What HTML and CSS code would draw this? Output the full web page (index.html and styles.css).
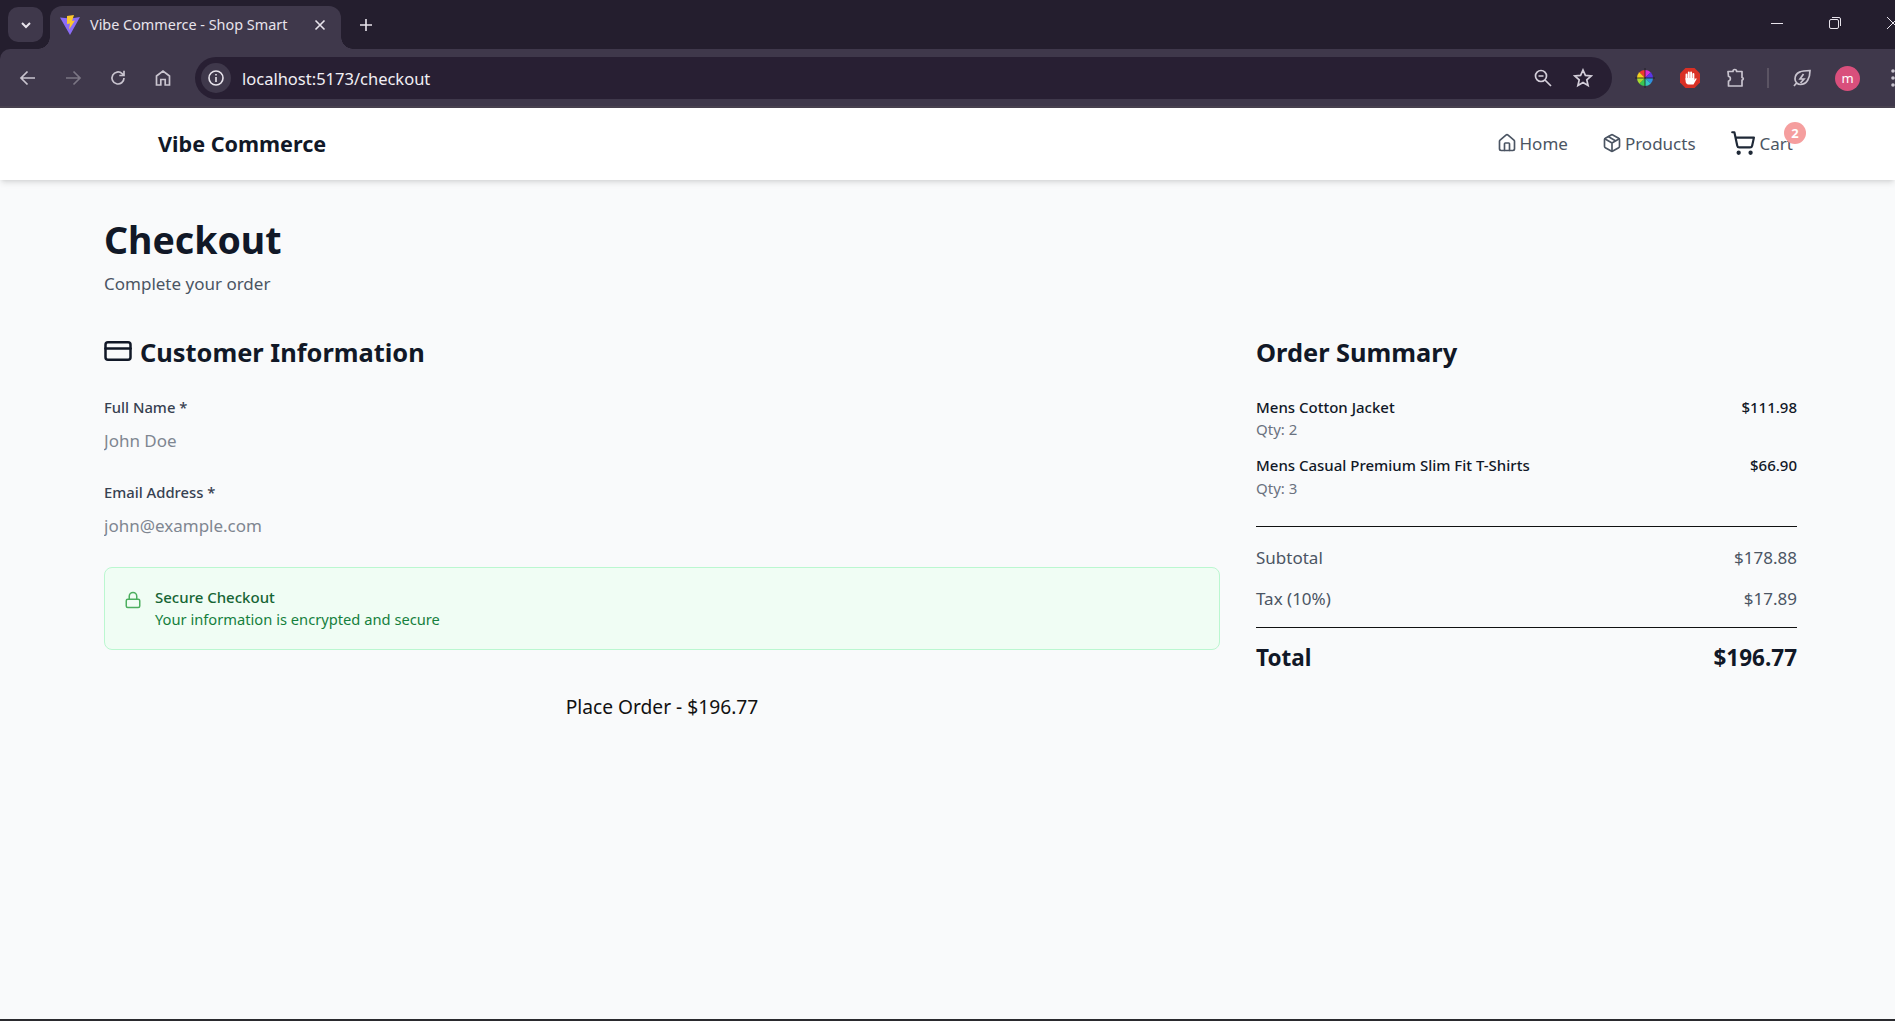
FILE: index.html
```html
<!DOCTYPE html>
<html lang="en">
<head>
    <meta charset="UTF-8">
    <meta name="viewport" content="width=device-width, initial-scale=1.0">
    <title>Vibe Commerce - Shop Smart</title>
    <link rel="stylesheet" href="styles.css">
</head>
<body>
    <div class="chrome">
        <div class="tabstrip">
            <div class="tab-search">
                <svg width="14" height="14" viewBox="0 0 14 14" fill="none" stroke="#e8e4ec" stroke-width="2"><path d="M3 5l4 4 4-4"/></svg>
            </div>
            <div class="tab">
                <svg class="favicon" width="20" height="20" viewBox="0 0 20 20">
                    <path d="M0 2.500L10 20 20 2 14 3 10 3.500z" fill="#8b6cf6"/>
                    <path d="M7 1l7-1-2 6 3-.5-6 9 1-6-3 .5z" fill="#fcc72b"/>
                </svg>
                <span class="tab-title">Vibe Commerce - Shop Smart</span>
                <svg class="tab-close" width="12" height="12" viewBox="0 0 12 12" stroke="#e8e4ec" stroke-width="1.600"><path d="M1.500 1.500l9 9M10.500 1.500l-9 9"/></svg>
            </div>
            <svg class="new-tab" width="14" height="14" viewBox="0 0 14 14" stroke="#e8e4ec" stroke-width="1.600"><path d="M7 1v12M1 7h12"/></svg>
            <div class="window-controls">
                <svg width="14" height="14" viewBox="0 0 14 14" stroke="#e8e4ec"><path d="M1 7.500h12"/></svg>
                <svg width="14" height="14" viewBox="0 0 14 14" fill="none" stroke="#e8e4ec"><rect x="1.500" y="3.500" width="9" height="9" rx="1.500"/><path d="M4 1.500h7a1.500 1.500 0 0 1 1.500 1.500v7"/></svg>
                <svg width="14" height="14" viewBox="0 0 14 14" stroke="#e8e4ec"><path d="M1 1l12 12M13 1L1 13"/></svg>
            </div>
        </div>

        <div class="toolbar">
            <svg class="tool-icon" width="20" height="20" viewBox="0 0 20 20" fill="none" stroke="#c9c4cf" stroke-width="1.700"><path d="M17 10H3.500M9.500 3.500L3 10l6.500 6.500"/></svg>
            <svg class="tool-icon" width="20" height="20" viewBox="0 0 20 20" fill="none" stroke="#7b7684" stroke-width="1.700"><path d="M3 10h13.500M10.500 3.500L17 10l-6.500 6.500"/></svg>
            <svg class="tool-icon" width="20" height="20" viewBox="0 0 20 20" fill="none" stroke="#c9c4cf" stroke-width="1.700"><path d="M16 10a6 6 0 1 1-1.900-4.400L16 7.500M16 2.800v4.700h-4.700"/></svg>
            <svg class="tool-icon" width="20" height="20" viewBox="0 0 20 20" fill="none" stroke="#c9c4cf" stroke-width="1.700"><path d="M3.500 17V8L10 3l6.500 5v9h-4.300v-5.500H7.800V17z"/></svg>
            <div class="omnibox">
                <div class="site-info">
                    <svg width="18" height="18" viewBox="0 0 18 18" fill="none" stroke="#e8e4ec" stroke-width="1.600"><circle cx="9" cy="9" r="7"/><path d="M9 8v5M9 5v1.600"/></svg>
                </div>
                <span class="url">localhost:5173/checkout</span>
                <svg class="omni-zoom" width="20" height="20" viewBox="0 0 20 20" fill="none" stroke="#d3ced9" stroke-width="1.700"><circle cx="8" cy="8" r="5.500"/><path d="M5.500 8h5M12 12l6 6"/></svg>
                <svg class="omni-star" width="20" height="20" viewBox="0 0 20 20" fill="none" stroke="#d3ced9" stroke-width="1.700"><path d="M10 2l2.400 5.400 5.800.6-4.400 3.900 1.300 5.700-5.100-3-5.100 3 1.300-5.700L1.800 8l5.800-.6z"/></svg>
            </div>
            <div class="extensions">
                <svg class="ext-wheel" width="22" height="22" viewBox="0 0 22 22">
                    <clipPath id="wheel"><circle cx="11" cy="11" r="8"/></clipPath>
                    <g clip-path="url(#wheel)">
                        <path d="M11 11V1L4 4z" fill="#f0392f"/><path d="M11 11V1l7 3z" fill="#d62fd8"/>
                        <path d="M11 11l7-7 3 7z" fill="#5a35e8"/><path d="M11 11h10l-3 7z" fill="#2f8fe0"/>
                        <path d="M11 11l7 7-7 3z" fill="#35c8c0"/><path d="M11 11v10l-7-3z" fill="#38c850"/>
                        <path d="M11 11l-7 7-3-7z" fill="#a8dc30"/><path d="M11 11H1l3-7z" fill="#f5d020"/>
                    </g>
                    <path d="M11 1v20M1 11h20" stroke="#1c1c1c" stroke-width=".8"/>
                </svg>
                <svg width="22" height="22" viewBox="0 0 22 22">
                    <path d="M6.500 1h9L21 6.500v9L15.500 21h-9L1 15.500v-9z" fill="#d93025"/>
                    <path d="M7.500 7.500v5M9.800 5.500v6M12.100 5.500v6M14.400 7v5" stroke="#fff" stroke-width="1.900" stroke-linecap="round"/>
                    <path d="M6.600 11h8.700v2l1.200-1.500c.7-.5 1.300.1 1 .8L14.500 17.500H9.500C7.800 17.500 6.600 16 6.600 14z" fill="#fff"/>
                </svg>
                <svg class="ext-puzzle" width="20" height="20" viewBox="0 0 20 20" fill="none" stroke="#c9c4cf" stroke-width="1.700" stroke-linejoin="round"><path d="M2 3.500h5c0-1.500 1-2 1.800-2s1.800.5 1.800 2h5.400v6c1.700 0 1.700 2.500 0 2.500v6H2.500v-5c2.500 0 2.500-4.500 0-4.500z"/></svg>
                <span class="ext-divider"></span>
                <svg width="20" height="20" viewBox="0 0 20 20" fill="none" stroke="#c9c4cf" stroke-width="1.700"><path d="M18 2.500C10 2.500 3 4 3 11c0 3 2.500 5.500 5.500 5.500C15 16.500 18 10 18 2.500zM2 18l2.500-3M11.500 6L8 11h4l-3.500 4"/></svg>
                <div class="avatar">m</div>
                <svg class="kebab" width="6" height="20" viewBox="0 0 6 20" fill="#c9c4cf"><circle cx="3" cy="3" r="1.800"/><circle cx="3" cy="10" r="1.800"/><circle cx="3" cy="17" r="1.800"/></svg>
            </div>
        </div>
    </div>

    <nav class="navbar">
        <a class="brand">Vibe Commerce</a>
        <div class="nav-links">
            <a class="nav-link">
                <svg class="icon" width="20" height="20" viewBox="0 0 24 24"><path d="M15 21v-8a1 1 0 0 0-1-1h-4a1 1 0 0 0-1 1v8"/><path d="M3 10a2 2 0 0 1 .7-1.500l7-6a2 2 0 0 1 2.600 0l7 6A2 2 0 0 1 21 10v9a2 2 0 0 1-2 2H5a2 2 0 0 1-2-2z"/></svg>
                Home
            </a>
            <a class="nav-link">
                <svg class="icon" width="20" height="20" viewBox="0 0 24 24"><path d="M21 8a2 2 0 0 0-1-1.700l-7-4a2 2 0 0 0-2 0l-7 4A2 2 0 0 0 3 8v8a2 2 0 0 0 1 1.700l7 4a2 2 0 0 0 2 0l7-4a2 2 0 0 0 1-1.700z"/><path d="M3.300 7L12 12l8.700-5M12 22V12M7.500 4.300l9 5.200"/></svg>
                Products
            </a>
            <a class="nav-link cart-link">
                <svg class="icon cart-icon" width="26" height="26" viewBox="0 0 24 24"><circle cx="8" cy="21" r="1"/><circle cx="19" cy="21" r="1"/><path d="M2.050 2.050h2l2.660 12.420a2 2 0 0 0 2 1.580h9.780a2 2 0 0 0 1.950-1.570l1.650-7.430H5.120"/></svg>
                Cart
                <span class="cart-badge">2</span>
            </a>
        </div>
    </nav>

    <main class="page">
        <h1 class="page-title">Checkout</h1>
        <p class="page-sub">Complete your order</p>

        <div class="checkout-grid">
            <section class="customer">
                <h2 class="section-title">
                    <svg class="icon card-icon" width="30" height="30" viewBox="0 0 24 24"><rect x="2" y="5" width="20" height="14" rx="2"/><path d="M2 10h20"/></svg>
                    Customer Information
                </h2>
                <div class="field">
                    <label class="field-label" for="name">Full Name *</label>
                    <input class="field-input" id="name" type="text" placeholder="John Doe">
                </div>
                <div class="field">
                    <label class="field-label" for="email">Email Address *</label>
                    <input class="field-input" id="email" type="email" placeholder="john@example.com">
                </div>
                <div class="secure-box">
                    <svg class="secure-icon" width="18" height="18" viewBox="0 0 24 24"><rect x="3" y="11" width="18" height="11" rx="2"/><path d="M7 11V7a5 5 0 0 1 10 0v4"/></svg>
                    <div>
                        <div class="secure-title">Secure Checkout</div>
                        <div class="secure-text">Your information is encrypted and secure</div>
                    </div>
                </div>
                <button class="place-order" type="button">Place Order - $196.77</button>
            </section>

            <aside class="summary">
                <h2 class="section-title">Order Summary</h2>
                <div class="summary-items">
                    <div class="item">
                        <div>
                            <div class="item-name">Mens Cotton Jacket</div>
                            <div class="item-qty">Qty: 2</div>
                        </div>
                        <div class="item-price">$111.98</div>
                    </div>
                    <div class="item">
                        <div>
                            <div class="item-name">Mens Casual Premium Slim Fit T-Shirts</div>
                            <div class="item-qty">Qty: 3</div>
                        </div>
                        <div class="item-price">$66.90</div>
                    </div>
                </div>
                <div class="totals">
                    <div class="total-row"><span>Subtotal</span><span>$178.88</span></div>
                    <div class="total-row"><span>Tax (10%)</span><span>$17.89</span></div>
                </div>
                <div class="grand-total"><span>Total</span><span>$196.77</span></div>
            </aside>
        </div>
    </main>
</body>
</html>
```

FILE: styles.css
```css
* {
    box-sizing: border-box;
}
html, body {
    height: 100%;
}
body {
    margin: 0;
    display: flex;
    flex-direction: column;
    overflow: hidden;
    background-color: #f9fafb;
    border-bottom: 2px solid #2a2a2e;
    font-family: "Noto Sans", "Open Sans", sans-serif;
    color: #111827;
}

/* browser chrome */
.chrome {
    flex: none;
    background-color: #241e2e;
}
.tabstrip {
    height: 49px;
    display: flex;
    align-items: center;
    padding-left: 8px;
}
.tab-search {
    width: 35px;
    height: 35px;
    border-radius: 10px;
    background-color: #3f384b;
    display: flex;
    align-items: center;
    justify-content: center;
}
.tab {
    width: 291px;
    height: 43px;
    margin-left: 7px;
    align-self: flex-end;
    padding: 0 15px 6px 10px;
    display: flex;
    align-items: center;
    border-radius: 12px 12px 0 0;
    background-color: #3f384b;
    position: relative;
}
.tab::before, .tab::after {
    content: "";
    position: absolute;
    bottom: 0;
    width: 12px;
    height: 12px;
}
.tab::before {
    left: -12px;
    background: radial-gradient(circle at 0 0, transparent 11.5px, #3f384b 12px);
}
.tab::after {
    right: -12px;
    background: radial-gradient(circle at 100% 0, transparent 11.5px, #3f384b 12px);
}
.favicon {
    flex: none;
}
.tab-title {
    margin-left: 10px;
    flex: 1;
    font-size: 14.4px;
    color: #e8e4ec;
    white-space: nowrap;
}
.new-tab {
    margin-left: 18px;
}
.window-controls {
    margin-left: auto;
    margin-right: -5px;
    margin-bottom: 3px;
    display: flex;
    gap: 44px;
}
.toolbar {
    height: 59px;
    display: flex;
    align-items: center;
    padding-top: 1px;
    padding-left: 18px;
    background-color: #3f384b;
    border-bottom: 2px solid #48414f;
    border-top-left-radius: 10px;
}
.toolbar .tool-icon {
    margin-right: 25px;
    flex: none;
}
.omnibox {
    width: 1417px;
    height: 42px;
    margin-left: -3px;
    padding-left: 6px;
    display: flex;
    align-items: center;
    border-radius: 21px;
    background-color: #281f33;
    flex: none;
}
.site-info {
    width: 30px;
    height: 30px;
    border-radius: 50%;
    background-color: #3f384b;
    display: flex;
    align-items: center;
    justify-content: center;
}
.url {
    margin-left: 11px;
    flex: 1;
    font-size: 16.5px;
    color: #f1eef4;
}
.omni-star {
    margin-left: 20px;
    margin-right: 19px;
}
.extensions {
    margin-left: 22px;
    display: flex;
    align-items: center;
    gap: 23px;
    flex: none;
}
.ext-puzzle {
    margin-left: 2px;
}
.ext-divider {
    width: 2px;
    height: 20px;
    margin-left: -2px;
    background-color: #5b5463;
}
.avatar {
    width: 25px;
    height: 25px;
    border-radius: 50%;
    background-color: #d94f7c;
    color: #fff;
    font-size: 13px;
    display: flex;
    align-items: center;
    justify-content: center;
}
.kebab {
    margin-left: 7px;
    flex: none;
}

/* site nav */
.navbar {
    height: 72px;
    flex: none;
    display: flex;
    align-items: center;
    justify-content: space-between;
    padding: 0 102px 2px 158px;
    background-color: #fff;
    box-shadow: 0 4px 6px -1px rgba(0, 0, 0, 0.1), 0 2px 4px -2px rgba(0, 0, 0, 0.1);
    position: relative;
}
.brand {
    font-size: 21.6px;
    font-weight: 700;
    color: #111827;
}
.nav-links {
    display: flex;
    align-items: center;
    gap: 34px;
}
.nav-link {
    display: flex;
    align-items: center;
    gap: 3px;
    font-size: 17px;
    color: #4b5563;
    position: relative;
}
.cart-link {
    gap: 4px;
}
.icon {
    fill: none;
    stroke: currentColor;
    stroke-width: 2;
    stroke-linecap: round;
    stroke-linejoin: round;
    flex: none;
}
.cart-icon {
    color: #1f2937;
}
.cart-badge {
    position: absolute;
    top: -8px;
    right: -13px;
    width: 22px;
    height: 22px;
    border-radius: 50%;
    background-color: #f59e9e;
    color: #fff;
    font-size: 13px;
    font-weight: 700;
    display: flex;
    align-items: center;
    justify-content: center;
}

/* page */
.page {
    padding: 0 98px 0 104px;
}
.page-title {
    margin: 36px 0 0;
    font-size: 37.5px;
    line-height: 48px;
    font-weight: 700;
}
.page-sub {
    margin: 6px 0 0;
    font-size: 17px;
    line-height: 28px;
    color: #4b5563;
}
.checkout-grid {
    margin-top: 38px;
    display: grid;
    grid-template-columns: 1116px 541px;
    gap: 36px;
}
.section-title {
    margin: 0;
    display: flex;
    align-items: center;
    gap: 7px;
    font-size: 25.4px;
    line-height: 32px;
    font-weight: 700;
}
.card-icon {
    margin: -3px 0 0 -1px;
}
.field {
    margin-top: 27px;
}
.customer .field + .field {
    margin-top: 19px;
}
.field-label {
    display: block;
    font-size: 14.8px;
    line-height: 24px;
    font-weight: 500;
    color: #374151;
}
.field-input {
    display: block;
    width: 100%;
    height: 42px;
    border: 0;
    padding: 0;
    background: transparent;
    outline: none;
    font-family: inherit;
    font-size: 17px;
}
.field-input::placeholder {
    color: #7f8691;
}
.secure-box {
    margin-top: 21px;
    height: 83px;
    padding: 18px 19px;
    display: flex;
    gap: 13px;
    border: 1px solid #bbf7d0;
    border-radius: 8px;
    background-color: #f0fdf4;
}
.secure-icon {
    margin-top: 5px;
    fill: none;
    stroke: #4caf5f;
    stroke-width: 2;
    stroke-linecap: round;
    stroke-linejoin: round;
    flex: none;
}
.secure-title {
    font-size: 15px;
    line-height: 22px;
    font-weight: 500;
    color: #166534;
}
.secure-text {
    font-size: 14.7px;
    line-height: 22px;
    color: #15803d;
}
.place-order {
    display: block;
    width: 100%;
    margin-top: 28px;
    height: 56px;
    border: 0;
    background: transparent;
    font-family: inherit;
    font-size: 19.2px;
    color: #111;
}
.summary-items {
    margin-top: 27px;
    padding-bottom: 27px;
    border-bottom: 1px solid #111;
}
.item {
    display: flex;
    justify-content: space-between;
    margin-bottom: 13px;
}
.item:last-child {
    margin-bottom: 0;
}
.item-name, .item-price {
    font-size: 15px;
    line-height: 24px;
    font-weight: 500;
    color: #111827;
}
.item-qty {
    font-size: 15px;
    line-height: 21px;
    color: #6b7280;
}
.item:last-child .item-qty {
    margin-top: 1px;
}
.totals {
    padding: 17px 0 14px;
    border-bottom: 1px solid #111;
}
.total-row {
    display: flex;
    justify-content: space-between;
    font-size: 17px;
    line-height: 28px;
    color: #4b5563;
}
.total-row + .total-row {
    margin-top: 13px;
}
.grand-total {
    margin-top: 14px;
    display: flex;
    justify-content: space-between;
    font-size: 22.5px;
    line-height: 32px;
    font-weight: 700;
}
```
